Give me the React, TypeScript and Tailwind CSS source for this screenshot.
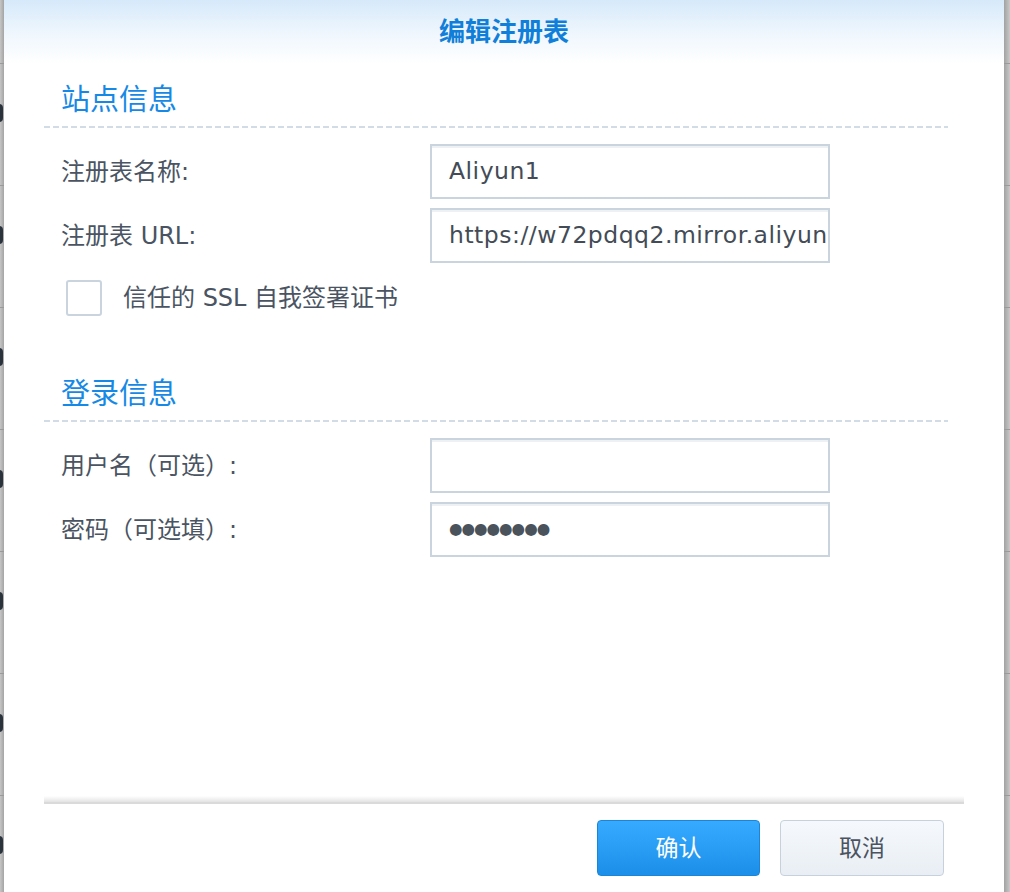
const font = "font-['DejaVu_Sans','Noto_Sans_CJK_SC',sans-serif]";

const rows = [0, 1, 2, 3, 4, 5, 6, 7];

function SideStrip({ side }: { side: "left" | "right" }) {
    const bg =
        side === "left"
            ? "bg-gradient-to-r from-[#c6c6c6] to-[#a4a4a4]"
            : "bg-gradient-to-r from-[#a2a2a2] to-[#c9c9c9]";
    return (
        <div className={`flex flex-col overflow-hidden ${bg} ${side === "left" ? "w-[4px]" : "w-[6px]"}`}>
            {rows.map((i) => (
                <div
                    key={i}
                    className={`shrink-0 border-b border-[#9a9a9a] ${i === 0 ? "h-[64px]" : "h-[122px]"}`}
                >
                    {side === "left" && i > 0 && (
                        <div className="mt-[40px] -ml-[8px] h-[18px] w-[11px] rounded-[4px] border-[3px] border-[#2a323b]"></div>
                    )}
                </div>
            ))}
        </div>
    );
}

function SectionTitle({ text, top }: { text: string; top: string }) {
    return (
        <div className={top}>
            <div className={`h-[36px] pl-[17px] pt-[6px] flex items-center text-[29px] text-[#1689e6] ${font}`}>
                {text}
            </div>
            <div className="mt-[10px] mr-[16px] h-[2px] bg-[repeating-linear-gradient(to_right,#d2dce6_0_6px,transparent_6px_9px)]"></div>
        </div>
    );
}

function Field({ label, children, top }: { label: string; children?: React.ReactNode; top: string }) {
    return (
        <div className={`flex items-center h-[55px] ${top}`}>
            <div className={`w-[386px] pl-[17px] text-[24px] text-[#4a5462] ${font}`}>{label}</div>
            <div className="w-[400px] h-[55px] border-2 border-[#c9d4df] bg-white shadow-[inset_0_2px_0_#eef1f4] px-[17px] flex items-center overflow-hidden whitespace-nowrap">
                {children}
            </div>
        </div>
    );
}

export default function App() {
    return (
        <div className="w-[1010px] h-[892px] flex overflow-hidden bg-[#bdbdbd]">
            <SideStrip side="left" />

            <div className="w-[1000px] h-full bg-white flex flex-col">
                <div className="h-[64px] shrink-0 flex items-center justify-center bg-gradient-to-b from-[#d6e9fa] via-[#eef6fd] to-white">
                    <p className={`text-[26px] font-bold text-[#0f7fd9] ${font}`}>编辑注册表</p>
                </div>

                <div className="px-[40px]">
                    <SectionTitle text="站点信息" top="mt-[16px]" />

                    <Field label="注册表名称:" top="mt-[16px]">
                        <span className={`text-[23.5px] tracking-[0.5px] text-[#434c56] ${font}`}>Aliyun1</span>
                    </Field>
                    <Field label="注册表 URL:" top="mt-[9px]">
                        <span className={`text-[23.5px] tracking-[0.5px] text-[#434c56] ${font}`}>
                            https://w72pdqq2.mirror.aliyuncs.com
                        </span>
                    </Field>

                    <div className="mt-[17px] pl-[22px] flex items-center h-[36px]">
                        <div className="w-[36px] h-[36px] border-2 border-[#c9d4df] rounded-[3px] bg-white"></div>
                        <span className={`ml-[21px] text-[24px] text-[#4a5462] ${font}`}>信任的 SSL 自我签署证书</span>
                    </div>

                    <SectionTitle text="登录信息" top="mt-[58px]" />

                    <Field label="用户名（可选）:" top="mt-[16px]" />
                    <Field label="密码（可选填）:" top="mt-[9px]">
                        <span className="text-[15.5px] tracking-[-1px] text-[#4a525c] font-['DejaVu_Sans',sans-serif]">●●●●●●●●</span>
                    </Field>
                </div>

                <div className="flex-1"></div>

                <div className="h-[96px] shrink-0">
                    <div className="ml-[40px] w-[920px] h-[8px] bg-gradient-to-b from-white to-[#e3e3e3] border-b-2 border-[#dadada]"></div>
                    <div className="mt-[16px] flex justify-end gap-[20px] pr-[60px]">
                        <button className={`w-[163px] h-[56px] rounded-[4px] border border-[#1a86d8] bg-gradient-to-b from-[#36aaff] to-[#1b8fe9] text-white text-[23px] ${font}`}>
                            确认
                        </button>
                        <button className={`w-[164px] h-[56px] rounded-[4px] border border-[#c7d1dc] bg-gradient-to-b from-[#f5f9fd] to-[#e9eef4] text-[#4b5360] text-[23px] ${font}`}>
                            取消
                        </button>
                    </div>
                </div>
            </div>

            <SideStrip side="right" />
        </div>
    );
}
